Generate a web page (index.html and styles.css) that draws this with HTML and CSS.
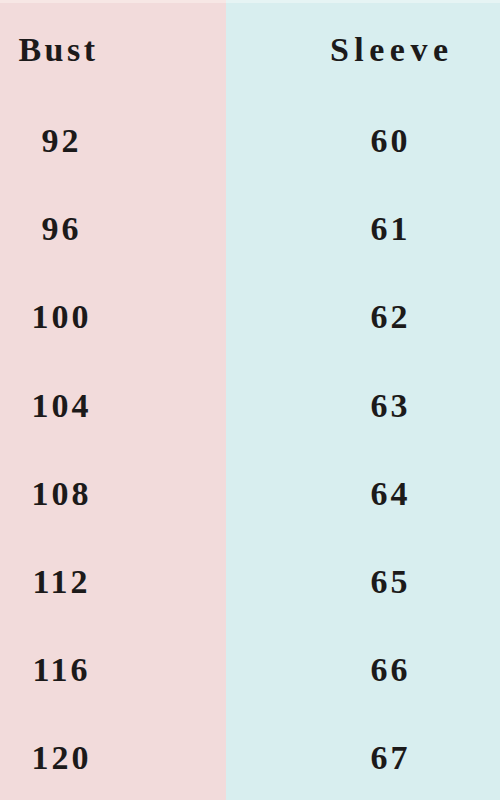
FILE: index.html
```html
<!DOCTYPE html>
<html>
<head>
<meta charset="utf-8">
<link rel="stylesheet" href="styles.css">
</head>
<body>
<div class="chart">
  <div class="col col-bust">
    <div class="cell head head-bust">Bust</div>
    <div class="cell">92</div>
    <div class="cell">96</div>
    <div class="cell">100</div>
    <div class="cell">104</div>
    <div class="cell">108</div>
    <div class="cell">112</div>
    <div class="cell">116</div>
    <div class="cell">120</div>
  </div>
  <div class="col col-sleeve">
    <div class="cell head head-sleeve">Sleeve</div>
    <div class="cell">60</div>
    <div class="cell">61</div>
    <div class="cell">62</div>
    <div class="cell">63</div>
    <div class="cell">64</div>
    <div class="cell">65</div>
    <div class="cell">66</div>
    <div class="cell">67</div>
  </div>
</div>
</body>
</html>
```
FILE: styles.css
```css
html, body {
  margin: 0;
  padding: 0;
  background: #ffffff;
}
.chart {
  display: flex;
  width: 500px;
  height: 800px;
  overflow: hidden;
  font-family: "Liberation Serif", "Times New Roman", serif;
  font-weight: bold;
  font-size: 34px;
  color: #1c1a1a;
}
.col {
  display: flex;
  flex-direction: column;
  height: 800px;
  box-sizing: border-box;
  border-top: 3px solid;
}
.col-bust {
  width: 226px;
  background: #f2dbdb;
  border-top-color: #f7e7e5;
}
.col-sleeve {
  flex: 1;
  background: #d8eeef;
  border-top-color: #e6f4f4;
  padding-left: 74px;
}
.col-bust .cell {
  width: 120px;
}
.col-sleeve .cell {
  width: 178px;
}
.cell {
  text-align: center;
  height: 88.2px;
  line-height: 88.2px;
  flex: none;
  letter-spacing: 3px;
  text-indent: 3px;
}
.head {
  height: 94px;
  line-height: 94px;
}
.col-bust .head-bust {
  letter-spacing: 3.5px;
  text-indent: 1px;
  width: 116px;
}
.head-sleeve {
  letter-spacing: 5.5px;
  text-indent: 5.5px;
}
```
